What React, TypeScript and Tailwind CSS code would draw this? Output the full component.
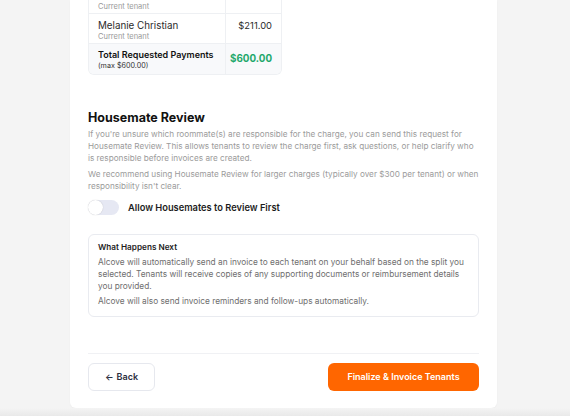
import React from "react";

export default function App() {
  return (
    <div className="min-h-[416px] w-[570px] bg-[#f4f4f4] font-['Inter',sans-serif] flex flex-col overflow-hidden">
      <div className="ml-[70px] w-[427px] bg-white rounded-b-[6px] px-[18px] pb-[17px] shadow-[0_1px_2px_rgba(0,0,0,0.03)]">
        {/* Table */}
        <div className="w-[194px] border border-t-0 border-[#eef0f3] rounded-b-[6px] overflow-hidden">
          <div className="flex h-[14px] border-b border-[#eef0f3]">
            <div className="w-[137px] border-r border-[#eef0f3] pl-[9px] pt-[1px] text-[7.5px] leading-[11px] text-[#9a9a9a]">Current tenant</div>
            <div className="flex-1" />
          </div>
          <div className="flex h-[30px] border-b border-[#eef0f3]">
            <div className="w-[137px] border-r border-[#eef0f3] pl-[9px] pt-[5px] flex flex-col">
              <span className="text-[9.8px] leading-[13px] text-[#2b2b2b]">Melanie Christian</span>
              <span className="text-[7.5px] leading-[10px] text-[#9a9a9a]">Current tenant</span>
            </div>
            <div className="flex-1 pr-[9px] pt-[5px] text-right text-[9.4px] leading-[13px] text-[#2b2b2b]">$211.00</div>
          </div>
          <div className="flex h-[30px] bg-[#f8f9fb]">
            <div className="w-[137px] border-r border-[#eef0f3] pl-[9px] pt-[5px] flex flex-col">
              <span className="text-[9px] leading-[12px] font-semibold text-[#111] whitespace-nowrap">Total Requested Payments</span>
              <span className="text-[7.2px] leading-[10px] text-[#333]">(max $600.00)</span>
            </div>
            <div className="flex-1 pr-[9px] flex items-center justify-end text-[9.8px] font-bold text-[#1fa86b]">$600.00</div>
          </div>
        </div>

        {/* Housemate Review */}
        <h2 className="mt-[34px] text-[12.5px] leading-[18px] font-bold text-[#111]">Housemate Review</h2>
        <p className="mt-[1px] text-[8.2px] leading-[12px] text-[#9b9b9b]">
          If you're unsure which roommate(s) are responsible for the charge, you can send this request for Housemate Review. This allows tenants to review the charge first, ask questions, or help clarify who is responsible before invoices are created.
        </p>
        <p className="mt-[4px] text-[8.2px] leading-[12px] text-[#9b9b9b]">
          We recommend using Housemate Review for larger charges (typically over $300 per tenant) or when responsibility isn't clear.
        </p>

        <div className="mt-[8px] flex items-center gap-[9px]">
          <div className="w-[31px] h-[15px] rounded-full bg-[#e6e8f3] flex items-center">
            <div className="w-[15px] h-[15px] rounded-full bg-white shadow-[0_0_1px_rgba(0,0,0,0.25)]" />
          </div>
          <span className="text-[9.3px] font-semibold text-[#1d1d1d]">Allow Housemates to Review First</span>
        </div>

        <div className="mt-[19px] border border-[#e9ebf0] rounded-[6px] px-[9px] pt-[6px] pb-[9px]">
          <div className="text-[8.2px] leading-[12px] font-semibold text-[#1d1d1d]">What Happens Next</div>
          <p className="mt-[3px] text-[8.3px] leading-[12px] text-[#6e6e6e]">
            Alcove will automatically send an invoice to each tenant on your behalf based on the split you selected. Tenants will receive copies of any supporting documents or reimbursement details you provided.
          </p>
          <p className="mt-[3px] text-[8.3px] leading-[12px] text-[#6e6e6e]">
            Alcove will also send invoice reminders and follow-ups automatically.
          </p>
        </div>

        <div className="mt-[36px] border-t border-[#f0f1f4] pt-[9px] flex justify-between">
          <button className="w-[67px] h-[28px] border border-[#e6e8ee] rounded-[6px] bg-white flex items-center justify-center gap-[3px] text-[9px] font-semibold text-[#2a2d3e]">
            <span>←</span>
            <span>Back</span>
          </button>
          <button className="w-[151px] h-[28px] rounded-[6px] bg-[#ff6600] flex items-center justify-center text-[9px] font-semibold text-white">
            Finalize &amp; Invoice Tenants
          </button>
        </div>
      </div>
      <div className="flex-1 bg-gradient-to-b from-[#f4f4f4] to-[#e9e9e9]" />
    </div>
  );
}
